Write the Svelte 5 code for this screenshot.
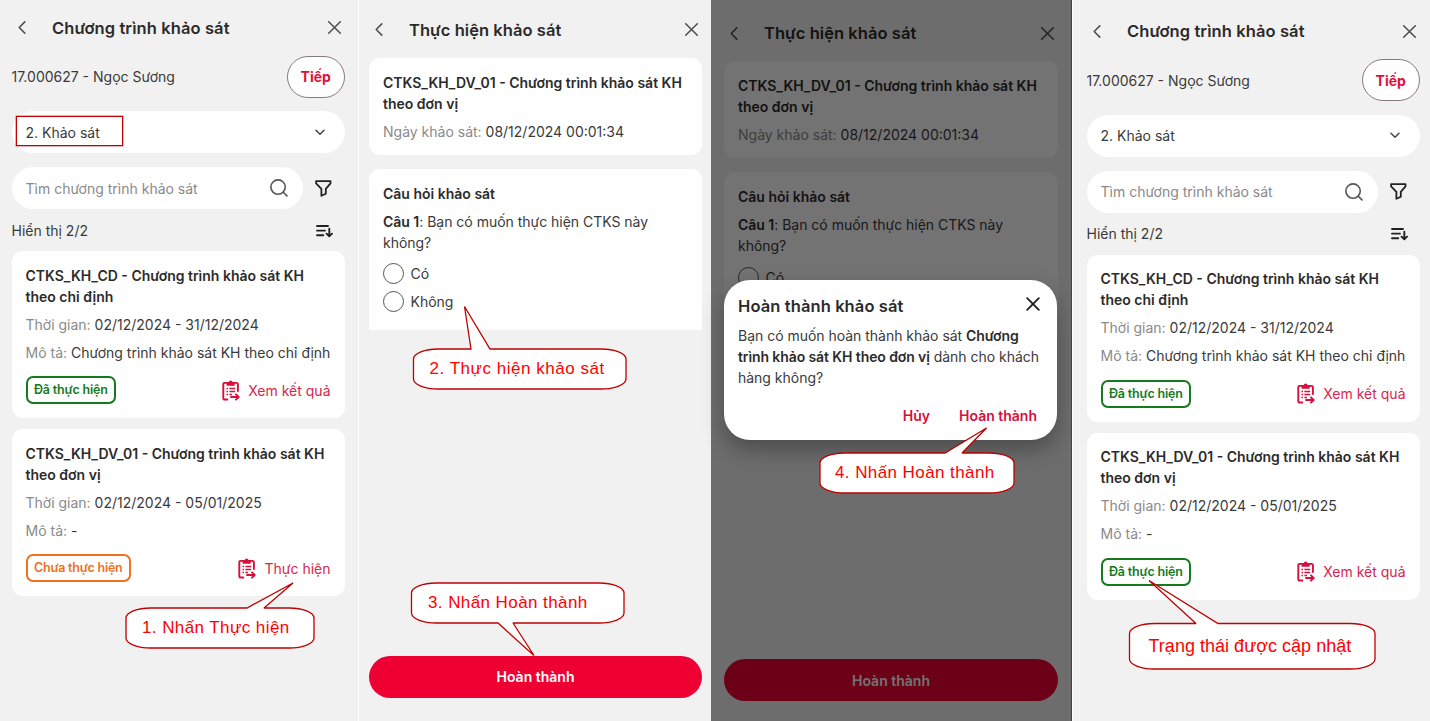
<script>
  const done = [
    { title: ['CTKS_KH_CD - Chương trình khảo sát KH', 'theo chỉ định'], time: '02/12/2024 - 31/12/2024', desc: 'Chương trình khảo sát KH theo chỉ định', status: 'Đã thực hiện', pending: false, action: 'Xem kết quả' },
    { title: ['CTKS_KH_DV_01 - Chương trình khảo sát KH', 'theo đơn vị'], time: '02/12/2024 - 05/01/2025', desc: '-', status: 'Đã thực hiện', pending: false, action: 'Xem kết quả' }
  ];
  const before = [done[0], { ...done[1], status: 'Chưa thực hiện', pending: true, action: 'Thực hiện' }];

  const callouts = [
    { x: 126, y: 608, w: 188, h: 40, edge: 'top', a: 247, b: 264, tx: 293, ty: 583, text: '1. Nhấn Thực hiện', lx: 142, ly: 633, sp: 0.42, size: 17 },
    { x: 413.5, y: 349, w: 212.5, h: 40, edge: 'top', a: 471, b: 490, tx: 464.5, ty: 306.5, text: '2. Thực hiện khảo sát', lx: 429.5, ly: 374, sp: 0.53, size: 17 },
    { x: 411.5, y: 583, w: 212.5, h: 40, edge: 'bottom', a: 498, b: 513, tx: 534, ty: 655.5, text: '3. Nhấn Hoàn thành', lx: 428, ly: 608, sp: 0.42, size: 17 },
    { x: 820, y: 453, w: 194, h: 40, edge: 'top', a: 945, b: 962, tx: 986.5, ty: 428, text: '4. Nhấn Hoàn thành', lx: 835, ly: 478, sp: 0.42, size: 17 },
    { x: 1129.5, y: 623.5, w: 245.5, h: 45.5, edge: 'top', a: 1196, b: 1218, tx: 1149, ty: 580.5, text: 'Trạng thái được cập nhật', lx: 1148.5, ly: 652, sp: 0.02, size: 18 }
  ];

  function bubble(c) {
    const rx = 25, ry = 10, r = c.x + c.w, b = c.y + c.h;
    const top = c.edge === 'top' ? `H${c.a} L${c.tx} ${c.ty} L${c.b} ${c.y} ` : '';
    const bottom = c.edge === 'bottom' ? `H${c.b} L${c.tx} ${c.ty} L${c.a} ${b} ` : '';
    return `M${c.x + rx} ${c.y} ${top}H${r - rx} A${rx} ${ry} 0 0 1 ${r} ${c.y + ry} V${b - ry} A${rx} ${ry} 0 0 1 ${r - rx} ${b} ${bottom}H${c.x + rx} A${rx} ${ry} 0 0 1 ${c.x} ${b - ry} V${c.y + ry} A${rx} ${ry} 0 0 1 ${c.x + rx} ${c.y}Z`;
  }
</script>

{#snippet header(title)}
  <header class="bar">
    <svg class="back" width="8" height="13" viewBox="0 0 8 13"><path d="M6.8 .9 1.2 6.5l5.6 5.6" /></svg>
    <h1>{title}</h1>
    <svg class="close" width="13" height="13" viewBox="0 0 13 13"><path d="M.7.7l11.6 11.6M12.3.7.7 12.3" /></svg>
  </header>
{/snippet}

{#snippet listScreen(items, marked)}
  {@render header('Chương trình khảo sát')}
  <div class="customer">
    <span class="t">17.000627 - Ngọc Sương</span>
    <button class="next">Tiếp</button>
  </div>
  <div class="pill select">
    <span class="t">2. Khảo sát</span>
    {#if marked}<i class="mark"></i>{/if}
    <svg width="10" height="7" viewBox="0 0 10 7"><path d="M1 1.2l4 4 4-4" /></svg>
  </div>
  <div class="searchrow">
    <div class="pill search">
      <span class="t">Tìm chương trình khảo sát</span>
      <svg width="18" height="18" viewBox="0 0 19 19"><circle cx="8.5" cy="8.5" r="7.6" /><path d="M14 14l3.9 3.8" /></svg>
    </div>
    <svg class="funnel" width="17" height="17" viewBox="0 0 17 17"><path d="M1.1 1.2h14.4v2.1l-4.7 5.5v4.9l-4.4 2.1V8.8L1.1 3.3z" /></svg>
  </div>
  <div class="count">
    <span class="t">Hiển thị 2/2</span>
    <svg width="17" height="14" viewBox="0 0 17 14"><path d="M1 2h11M1 6.6h8M1 11.2h6.3M13.3 4.8v7.4M10.6 9.7l2.7 2.7 2.7-2.7" /></svg>
  </div>
  {#each items as it}
    <article class="card item">
      <h2>{it.title[0]}<br />{it.title[1]}</h2>
      <p><em>Thời gian:</em> {it.time}</p>
      <p class="desc"><em>Mô tả:</em> {it.desc}</p>
      <div class="foot">
        <span class="badge" class:pending={it.pending}>{it.status}</span>
        <span class="action">
          <svg width="18" height="21" viewBox="0 0 18 21">
            <path d="M5 2.9H2.6Q1.3 2.9 1.3 4.2v13.7q0 1.6 1.5 1.6H5.4M12.2 2.9h2.3q1.4 0 1.4 1.3V11" />
            <path class="fill" d="M4.6 2h2.1a2 2 0 0 1 3.9 0h2.1v3.8H4.6z" />
            <path class="thin" d="M4.5 8.6h1.5M7.4 8.6h5.8M4.5 11.5h1.5M7.4 11.5h5.8M4.5 14.4h1.5M7.4 14.4h2.6" />
            <path d="M9 17h7.6M14 14.4l2.7 2.6-2.7 2.6" />
          </svg>
          <span>{it.action}</span>
        </span>
      </div>
    </article>
  {/each}
{/snippet}

{#snippet formScreen(options)}
  {@render header('Thực hiện khảo sát')}
  <article class="card info">
    <h2>CTKS_KH_DV_01 - Chương trình khảo sát KH<br />theo đơn vị</h2>
    <p><em>Ngày khảo sát:</em> 08/12/2024 00:01:34</p>
  </article>
  <article class="card question">
    <h2>Câu hỏi khảo sát</h2>
    <p><b>Câu 1</b>: Bạn có muốn thực hiện CTKS này<br />không?</p>
    {#each options as option}
      <div class="option"><i></i>{option}</div>
    {/each}
  </article>
  <button class="submit">Hoàn thành</button>
{/snippet}

<main>
  <section class="screen s1">{@render listScreen(before, true)}</section>
  <section class="screen s2">{@render formScreen(['Có', 'Không'])}</section>
  <section class="screen s3">
    {@render formScreen(['Có'])}
    <div class="scrim">
      <div class="dialog">
        <div class="dhead">
          <h1>Hoàn thành khảo sát</h1>
          <svg width="14" height="14" viewBox="0 0 14 14"><path d="M1.2 1.2l11.6 11.6M12.8 1.2 1.2 12.8" /></svg>
        </div>
        <p>Bạn có muốn hoàn thành khảo sát <b>Chương<br />trình khảo sát KH theo đơn vị</b> dành cho khách<br />hàng không?</p>
        <div class="dactions"><span>Hủy</span><span>Hoàn thành</span></div>
      </div>
    </div>
  </section>
  <section class="screen s4">{@render listScreen(done, false)}</section>

  <svg class="callouts" width="1430" height="721" viewBox="0 0 1430 721">
    {#each callouts as c}
      <path d={bubble(c)} />
      <text x={c.lx} y={c.ly} font-size={c.size} letter-spacing={c.sp}>{c.text}</text>
    {/each}
  </svg>
</main>

<style>
  :global(body) { background: #f1f1f1; }
  main {
    position: relative;
    display: grid;
    grid-template-columns: 359px 352px 361px 358px;
    width: 1430px;
    height: 721px;
    overflow: hidden;
    font: 400 14px/21px Inter, sans-serif;
    color: #3a3a3a;
    white-space: nowrap;
  }
  .screen {
    position: relative;
    box-sizing: border-box;
    height: 721px;
    background: #f1f1f1;
    display: flex;
    flex-direction: column;
  }
  .s1 { padding: 11.5px 13.5px 0 11.5px; border-right: 1.5px solid #fff; }
  .s2 { padding: 13.5px 9px 0 10px; }
  .s3 { padding: 17px 14px 0 13px; }
  .s4 { padding: 15px 10.5px 0 13.5px; border-left: 1.5px solid #fff; }
  svg { flex: none; fill: none; stroke-linecap: round; stroke-linejoin: round; }
  h1, h2, p { margin: 0; font-weight: 600; }
  h1 { font-size: 16.5px; line-height: 32px; color: #2b2b2b; letter-spacing: 0.1px; }
  h2 { font-size: 14px; line-height: 21px; color: #2b2b2b; }
  p { font-weight: 400; margin-top: 7px; }
  em { font-style: normal; color: #8a8a8a; }
  b { font-weight: 600; color: #2b2b2b; }
  button { font: inherit; letter-spacing: inherit; padding: 0; box-sizing: border-box; }
  .bar { display: flex; align-items: center; height: 32px; padding: 0 4px 0 6px; }
  .bar svg { stroke: #4d4d4d; stroke-width: 1.5; }
  .bar h1 { margin-left: 26.5px; flex: 1; }
  .s2 .bar h1, .s3 .bar h1 { margin-left: 26px; letter-spacing: 0.05px; }
  .customer { display: flex; justify-content: space-between; align-items: center; height: 42px; margin-top: 12px; }
  .next { width: 57.5px; height: 42px; border: 1px solid #8a7a7c; border-radius: 21px; background: #fff; color: #e0103a; font-weight: 700; }
  .pill { box-sizing: border-box; height: 42px; border-radius: 21px; background: #fff; display: flex; align-items: center; justify-content: space-between; }
  .select { position: relative; margin-top: 13.5px; padding: 0 19.5px 0 14px; }
  .select svg { stroke: #444; stroke-width: 1.5; }
  .mark { position: absolute; left: 4.5px; top: 5px; width: 105px; height: 28px; border: 1px solid #c00000; box-shadow: 0 0 0 .3px #c00000; }
  .searchrow { display: flex; align-items: center; margin-top: 14px; }
  .search { width: 291px; padding: 0 15px 0 14px; color: #8a8a8a; }
  .search svg { stroke: #555; stroke-width: 1.7; }
  .funnel { margin-left: 12.5px; stroke: #222; stroke-width: 1.8; }
  .count { display: flex; align-items: center; justify-content: space-between; height: 21px; margin: 10.5px 12px 10.5px 0; }
  .count svg { stroke: #222; stroke-width: 1.9; margin-top: 1px; }
  .card { box-sizing: border-box; background: #fff; border-radius: 11px; padding: 14px; }
  .item { height: 167px; margin-bottom: 11px; padding-top: 13.5px; }
  .foot { display: flex; justify-content: space-between; align-items: center; margin-top: 13.6px; }
  .badge { box-sizing: border-box; height: 28px; border: 2px solid #157a1c; color: #157a1c; border-radius: 7px; padding: 0 6.5px; font-size: 12.5px; font-weight: 600; line-height: 24px; letter-spacing: -0.18px; }
  .badge.pending { border-color: #ee7020; color: #ee7020; letter-spacing: -0.24px; }
  .action { display: flex; align-items: center; gap: 8px; color: #d9254c; }
  .action svg { stroke: #d60f3c; stroke-width: 1.9; }
  .action svg .fill { fill: #d60f3c; stroke: none; }
  .action svg .thin { stroke-width: 1.5; stroke-linecap: butt; }
  .info { height: 97px; margin-top: 12px; }
  .question { height: 161px; margin-top: 14px; border-radius: 11px 11px 0 0; }
  .question p { letter-spacing: -0.02px; }
  .option { display: flex; align-items: center; height: 28px; gap: 6.5px; }
  p + .option { margin-top: 7px; }
  .option i { box-sizing: border-box; width: 21px; height: 21px; border: 1px solid #555; border-radius: 50%; }
  .submit { height: 42px; margin-top: 326px; border: 0; border-radius: 21px; background: #ee0033; color: #fff; font-weight: 600; }
  .scrim { position: absolute; inset: 0; background: rgba(0, 0, 0, .55); border-right: 1px solid #444; padding: 280px 13px 0 13px; }
  .dialog { box-sizing: border-box; width: 333px; height: 160px; background: #fff; border-radius: 26px; padding: 10px 14px; box-shadow: 0 10px 22px rgba(0, 0, 0, .3); }
  .dhead { display: flex; justify-content: space-between; align-items: center; padding-right: 3px; }
  .dhead h1 { font-size: 16.5px; letter-spacing: 0.1px; }
  .dhead svg { stroke: #222; stroke-width: 1.9; margin-top: -4px; }
  .dialog p { margin-top: 3px; letter-spacing: -0.02px; }
  .dialog b { letter-spacing: -0.1px; }
  .dactions { display: flex; justify-content: flex-end; gap: 29px; padding-right: 6px; margin-top: 17.4px; color: #d60f3c; font-weight: 600; }
  .callouts { position: absolute; left: 0; top: 0; font-family: "Liberation Sans", Arial, sans-serif; }
  .callouts path { fill: #fff; stroke: #c00000; stroke-width: 1.3; stroke-linejoin: miter; stroke-miterlimit: 2; }
  .callouts text { fill: #f00; }
</style>
